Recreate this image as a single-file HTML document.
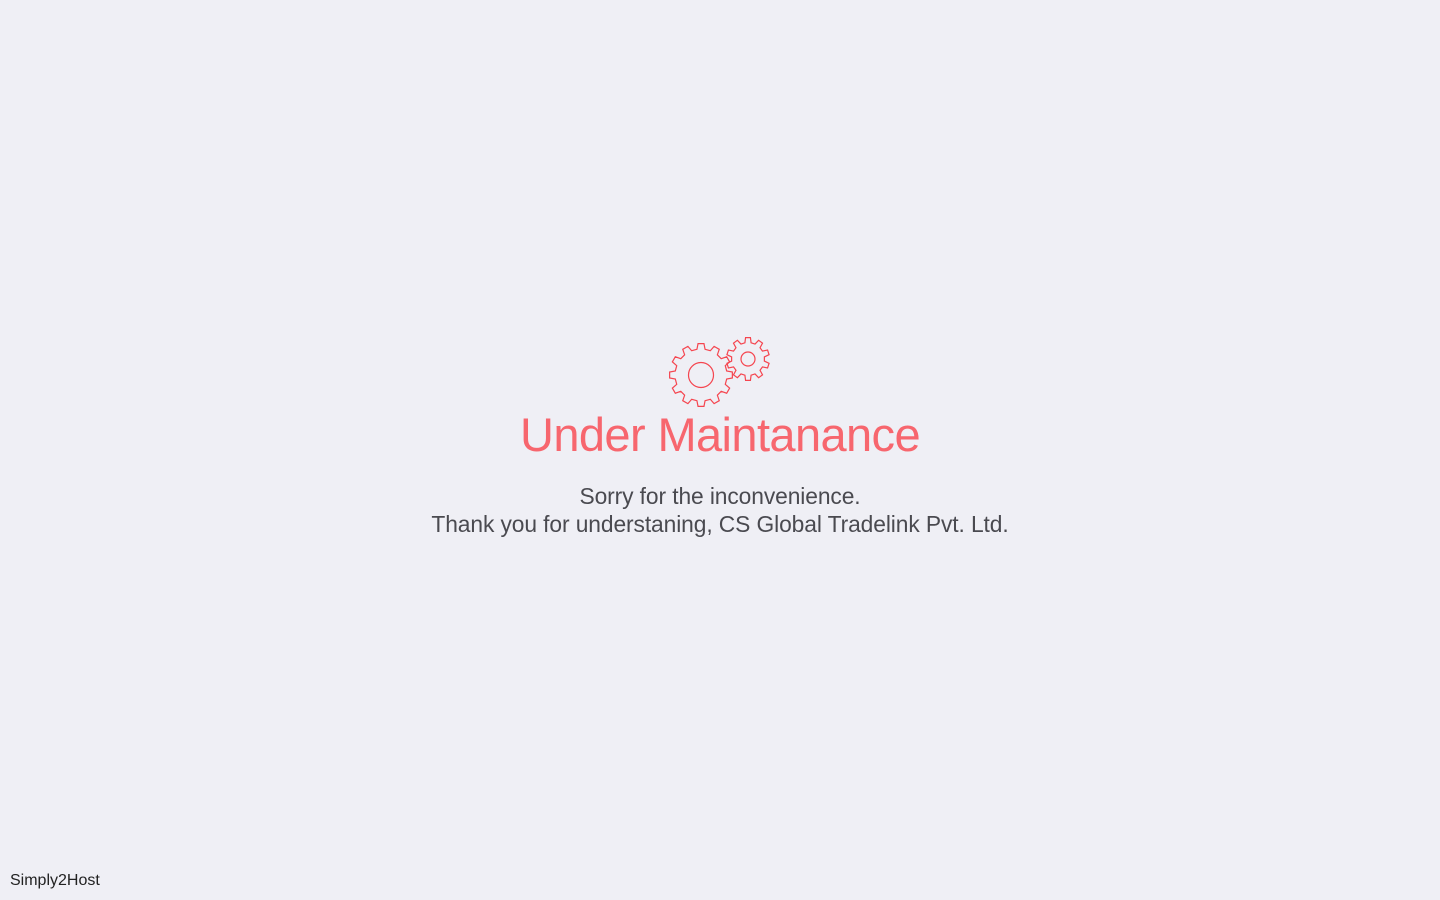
<!DOCTYPE html>
<html><head><meta charset="utf-8">
<style>
html,body{margin:0;padding:0;width:1440px;height:900px;background:#efeff5;overflow:hidden;font-family:"Liberation Sans",sans-serif;}
#g{position:absolute;left:0;top:0}
.t{position:absolute;left:0;width:1440px;text-align:center;white-space:nowrap}
h1{position:absolute;left:0;width:1440px;top:405px;margin:0;text-align:center;font-weight:normal;font-size:47px;line-height:60px;color:#f7666e;letter-spacing:-0.6px;}
.b{font-size:22.8px;color:#4a4a50;line-height:28px;letter-spacing:-0.1px}
.f{position:absolute;left:10px;top:872px;font-size:16px;color:#222;}
</style></head><body>
<svg id="g" width="1440" height="900"><g fill="none" stroke="#f5454f" stroke-width="1.2" id="gg">
<circle cx="701" cy="375" r="12.5"/><circle cx="748" cy="359" r="7"/></g></svg>
<h1>Under Maintanance</h1>
<div class="t b" style="top:482px">Sorry for the inconvenience.</div>
<div class="t b" style="top:510px">Thank you for understaning, CS Global Tradelink Pvt. Ltd.</div>
<div class="f">Simply2Host</div>
<script>
function gear(cx,cy,ro,ri,n,rot){var d="",s=2*Math.PI/n;for(var i=0;i<n;i++){var a=rot+i*s;var pts=[[ri,a-s*0.3],[ro,a-s*0.18],[ro,a+s*0.18],[ri,a+s*0.3],[ri,a+s*0.7]];for(var j=0;j<pts.length;j++){var p=pts[j];d+=(i==0&&j==0?"M":"L")+(cx+p[0]*Math.cos(p[1])).toFixed(2)+","+(cy+p[0]*Math.sin(p[1])).toFixed(2);}}return d+"Z";}
var g=document.getElementById("gg");
function add(d){var p=document.createElementNS("http://www.w3.org/2000/svg","path");p.setAttribute("d",d);g.appendChild(p);}
add(gear(701,375,31.5,26,12,-Math.PI/2));
add(gear(748,359,21.5,16.5,10,-Math.PI/2));
</script>
</body></html>
